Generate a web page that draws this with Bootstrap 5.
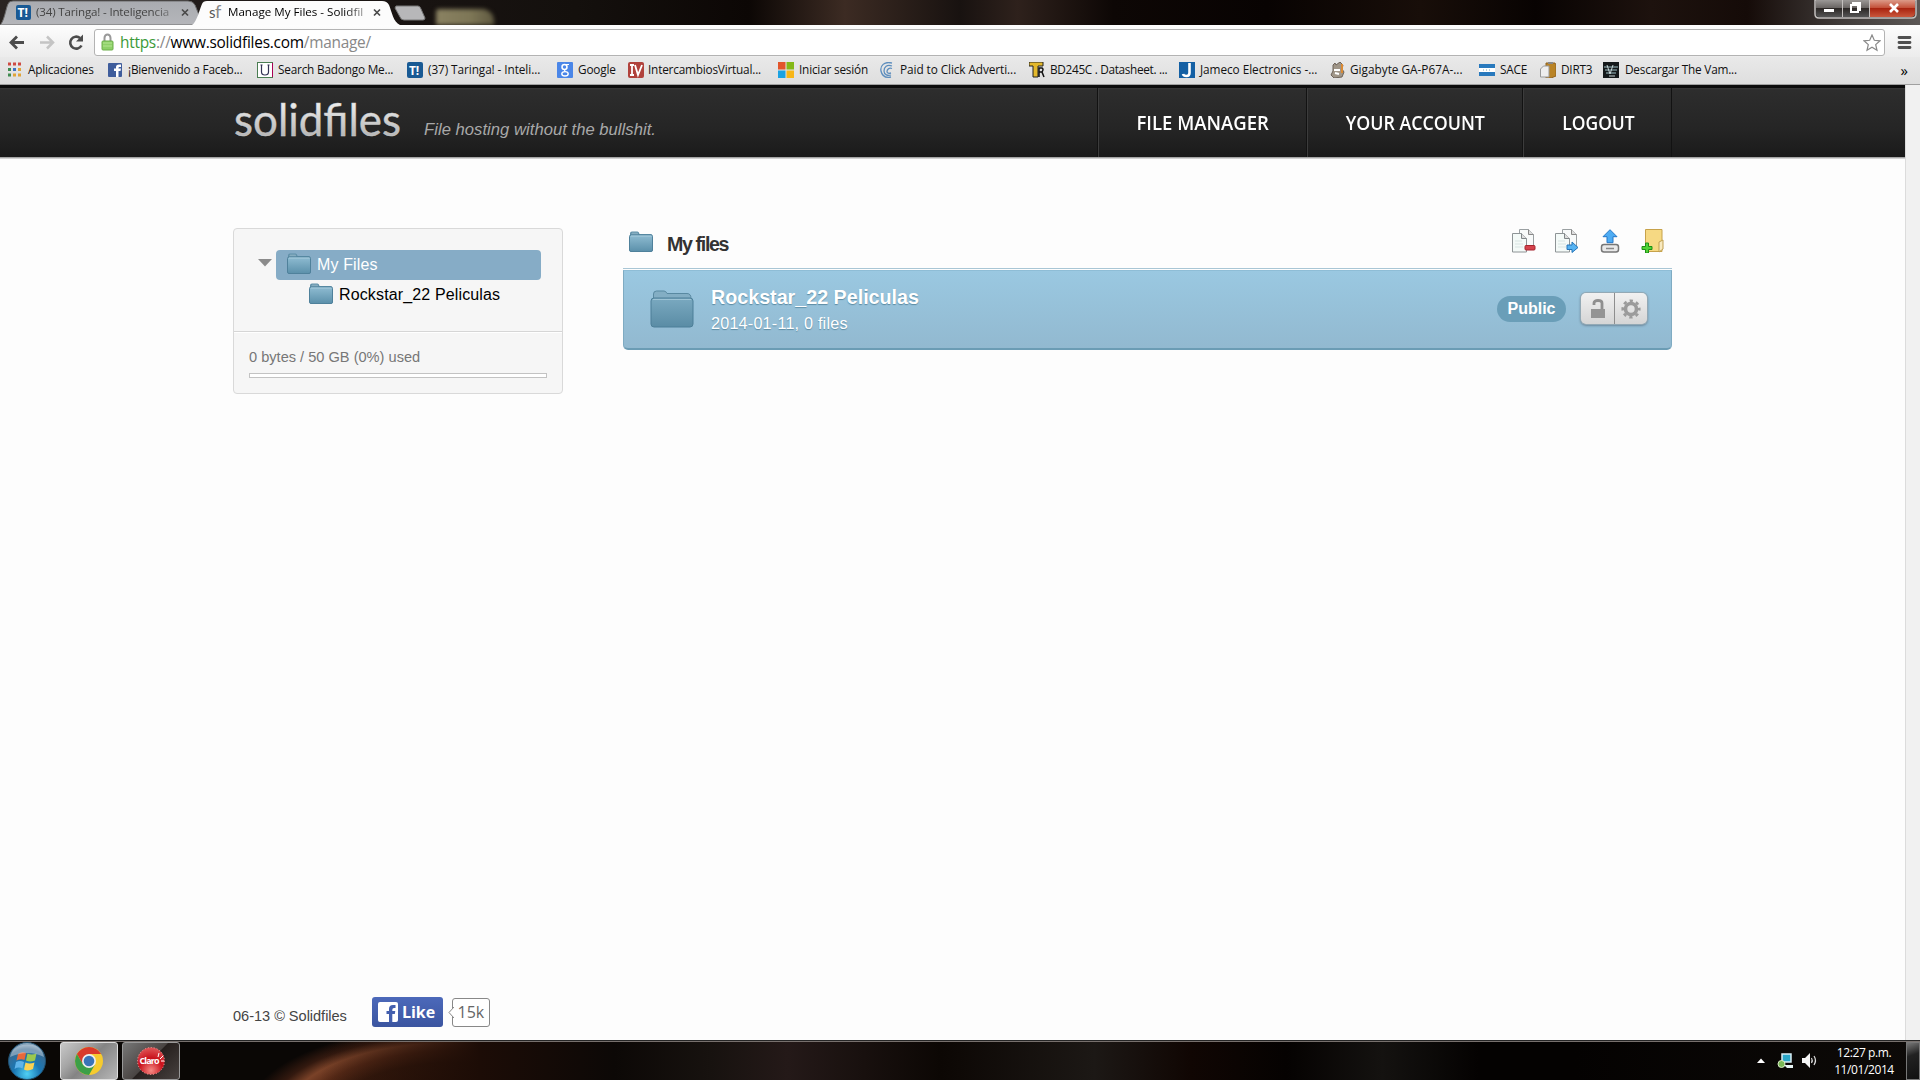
<!DOCTYPE html>
<html lang="es">
<head>
<meta charset="utf-8">
<title>Manage My Files - Solidfiles</title>
<link href="https://cdn.jsdelivr.net/npm/bootstrap@5.3.0/dist/css/bootstrap.min.css" rel="stylesheet">
<style>
body{width:1920px;height:1080px;overflow:hidden;background:#fdfdfd;font-family:"Liberation Sans",Arial,sans-serif;font-size:16px;line-height:1.2;color:#000}
svg{display:block;flex:none}
.ui{font-family:"Open Sans","Noto Sans",sans-serif;font-size:12px;white-space:nowrap}
.strip{height:25px;background:linear-gradient(90deg,#2a2422 0,#181311 22%,#14100d 30%,#0c0705 39%,#3c2b23 44%,#181210 50%,#2e211c 53%,#0d0705 58%,#080302 66%,#180e09 74%,#080302 80%,#1d120e 86%,#150b08 91%,#403b39 96%,#5c5856 100%)}
.glow{left:436px;top:9px;width:58px;height:16px;background:linear-gradient(90deg,#8a8262,#7d7656 60%,#5f5940);border-radius:3px 12px 0 0;filter:blur(2px)}
.tabtxt{font-size:11.6px;letter-spacing:-.18px;line-height:24px;height:24px}
.fade-r{-webkit-mask-image:linear-gradient(90deg,#000 82%,rgba(0,0,0,.25))}
.tab-one{width:196px;padding:0 0 0 15px}
.tab-two{width:204px;padding:0 0 0 12px}
.tabs-bg{left:0;top:0}
.toolbar{height:32px;background:linear-gradient(#fdfdfd,#ececec);padding:4px 7px 0 8px}
.omni{height:27px;border:1px solid #b3b3b3;border-radius:3px;background:#fff;width:1791px;padding:0 3px 0 6px}
.url{font-size:15.4px;letter-spacing:-.24px;line-height:24px;padding-left:5px}
.marks{height:28px;background:linear-gradient(#e9e9e9,#dedede);border-bottom:1px solid #a0a0a0;padding:0 0 2px 8px}
.bm{gap:5px;letter-spacing:-.2px;font-size:11.8px;color:#111}
.view{height:955px}
.page-col{width:1905px}
.scroller{width:15px;background:#f1f1f1;border-left:1px solid #dcdcdc}
.topbar{height:72px;border-top:3px solid #0c0c0c;background:linear-gradient(#3a3a3a 0,#2d2d2d 2px,#252525 60%,#1a1a1a 100%)}
.topshade{height:2px;background:linear-gradient(#8e8e8e,#e9e9e9)}
.wrap{width:1439px;margin-left:233px}
.slogan{font-size:16.6px;letter-spacing:.04px;color:#a9a9a9;font-style:italic;padding:32px 0 0 21px}
.navi{border-left:1px solid #121212;box-shadow:inset 1px 0 #3c3c3c;color:#fff;height:69px;font:600 19.5px "Open Sans",sans-serif}
.navi span{display:inline-block;white-space:nowrap;margin:0 -32px 0 -30px}
.side{width:330px;height:166px;border:1px solid #d9d9d9;border-radius:4px;background:#f6f6f6}
.tree{height:103px;padding:21px 21px 0 24px;border-bottom:1px solid #d6d6d6;letter-spacing:.14px}
.tree .fold{margin-top:-3px}
.sel{width:265px;height:30px;background:#86acc6;border-radius:4px;color:#fff;padding-left:11px;gap:6px}
.kid{height:30px;padding-left:51px;gap:6px}
.quota{border-top:1px solid #fff;padding:15px 15px 0;font-size:14.6px;line-height:18px;color:#777}
.meter{height:5px;border:1px solid #c3c3c3;background:#fff;margin-top:7px}
.files{width:1049px;margin-left:60px}
.head-row{height:41px;border-bottom:1px solid #a9c6d5;padding:0 7px 0 6px}
.ttl{font-size:19.6px;font-weight:700;letter-spacing:-1.35px;color:#333;padding:5px 0 0 14px}
.item-row{height:80px;margin-top:1px;background:linear-gradient(#9ac8e1,#92b9d0);border:1px solid #7fabc2;border-top-color:#8ebdd6;border-bottom:2px solid #6b9cb4;border-radius:0 0 5px 5px;padding:0 24px 2px 26px;color:#fff;text-shadow:0 1px 1px #5c8ba3}
.pub{width:69px;height:26px;border-radius:13px;background:#6a9eb8;font-weight:700;line-height:26px;text-align:center;text-shadow:none}
.duo{width:66px;height:31px;border-radius:5px;background:linear-gradient(#f1f1f1,#d5d5d5);box-shadow:0 0 0 1px #93a9b5,0 1px 3px #456}
.duo>div+div{border-left:1px solid #8e8e8e}
.foot{font-size:14.6px;color:#444;height:30px}
.like{width:71px;height:30px;border-radius:3px;background:linear-gradient(#4c69ba,#3b55a0);color:#fff;font:700 16px "Open Sans",sans-serif;gap:4px;padding-left:6px;margin-left:25px}
.cnt{width:38px;height:29px;border:1px solid #888;border-radius:3px;font:16px "Open Sans",sans-serif;color:#666;margin-left:9px;background:#fff}
.taskbar{height:40px;border-top:1px solid #262626;box-shadow:inset 0 1px #77706d;background:linear-gradient(90deg,transparent 320px,#1c0c06 480px,#0c0806 32%,#17120f 37%,#241918 41%,#0c0704 49%,#1c1815 57%,#100603 62%,#050201 67%,#141210 72%,#040201 77%,#040201 82%,#0d0a08 100%),radial-gradient(ellipse 200px 84px at 455px 72px,#2b1208 0,#381a0d 60%,#582a17 74%,#7a4228 84%,#33190f 93%,transparent 104%),#0a0705}
.tbtn{width:58px;height:38px;border:1px solid #999;border-radius:3px;background:linear-gradient(135deg,#777 0,#4a4543 48%,#26201e 50%,#47413f 100%)}
.tbtn.on{background:linear-gradient(135deg,#c8c8c8 0,#a6a6a6 30%,#848484 50%,#b7b7b7 100%);border-color:#ddd}
.clock{width:70px;font-size:12px;line-height:17px;letter-spacing:-.4px;color:#fff}
.desk{width:14px;height:38px;border:1px solid #777;background:linear-gradient(160deg,#777,#222 35%,#111)}
</style>
<script src="https://cdn.jsdelivr.net/npm/bootstrap@5.3.0/dist/js/bootstrap.bundle.min.js"></script>
</head>
<body>
<svg width="0" height="0" class="position-absolute"><defs>
<linearGradient id="fg" x2="0" y2="1"><stop stop-color="#8fbcd2"/><stop offset="1" stop-color="#5b90aa"/></linearGradient>
<linearGradient id="bg" x2="0" y2="1"><stop stop-color="#7aa9c0"/><stop offset="1" stop-color="#5a8ca5"/></linearGradient>
<linearGradient id="lg" x2="0" y2="1"><stop stop-color="#fff"/><stop offset="1" stop-color="#a8a8a8"/></linearGradient>
<linearGradient id="btn" x2="0" y2="1"><stop stop-color="#9b9896"/><stop offset=".45" stop-color="#6a6664"/><stop offset=".5" stop-color="#2c2826"/><stop offset="1" stop-color="#555"/></linearGradient>
<linearGradient id="red" x2="0" y2="1"><stop stop-color="#dc9a88"/><stop offset=".45" stop-color="#c4513a"/><stop offset=".5" stop-color="#a92410"/><stop offset="1" stop-color="#c9573c"/></linearGradient>
<radialGradient id="orb" cx=".5" cy=".85" r=".9"><stop stop-color="#4fd0f5"/><stop offset=".4" stop-color="#1a77b4"/><stop offset=".75" stop-color="#3a6a91"/><stop offset="1" stop-color="#b4c8d6"/></radialGradient>
<radialGradient id="cl" cx=".5" cy=".85" r=".9"><stop stop-color="#f58b84"/><stop offset=".5" stop-color="#c9101b"/><stop offset="1" stop-color="#e26060"/></radialGradient>
<symbol id="folder" viewBox="0 0 24 21"><path d="M1 19V2.500Q1 .5 3 .5h5.500q1.500 0 2 2.500h11q2 0 2 2v14.500q0 1-1 1H2q-1 0-1-1z" fill="#5f8fa8"/><path d="M3 1.500h5.500l1 2H2z" fill="#86adc0"/><rect x=".5" y="4" width="23" height="16.500" rx="1.500" fill="url(#fg)" stroke="#4f819b"/><path d="M2 5h20.500" stroke="#a7cbdc"/></symbol>
<symbol id="doc" viewBox="0 0 24 24"><path d="M7.500.5h9l5 5v14h-14z" fill="#f8fafa" stroke="#9aa0a2"/><path d="M16.500.5v5h5" fill="#ddd" stroke="#888"/><path d="M.5 4.500h9l5 5v13.500H.500z" fill="#f4faf8" stroke="#8e9496"/><path d="M9.500 4.500v5h5" fill="#ddd" stroke="#808688"/><path d="M3 12h7M3 15h8M3 18h8" stroke="#d7e4e2"/></symbol>
</defs></svg>

<div class="d-flex flex-column">
<!-- Window title strip -->
<div class="strip d-flex position-relative ui overflow-hidden">
  <div class="glow position-absolute"></div>
  <svg class="position-absolute tabs-bg" width="440" height="25"><defs><linearGradient id="t1" x2="0" y2="1"><stop stop-color="#a9abb0"/><stop offset="1" stop-color="#b5b6ba"/></linearGradient></defs>
    <path d="M0 25C4 22 6 8 8 4Q9 1 13 1H188Q193 1 195 5L203 25z" fill="url(#t1)" stroke="#6a6a6a"/>
    <path d="M192 25C197 22 200 8 202 4Q203 1 207 1H382Q387 1 389 5C392 12 393 22 400 25z" fill="#fcfcfc"/>
    <path d="M396 6H418Q420 6 421 9L425 18Q425 20 423 20H404Q401 20 400 17L395 8z" fill="#b7b7b9" stroke="#777"/></svg>
  <div class="tab-one d-flex position-relative gap-1">
    <svg width="17" height="21" viewBox="0 0 17 21"><rect x="1" y="5" width="15" height="15" rx="2" fill="#195a94"/><text x="2.500" y="17" font-size="12" font-weight="700" fill="#fff" font-family="Open Sans">T!</text></svg>
    <div class="tabtxt fade-r" style="width:141px;color:#444">(34) Taringa! - Inteligencia</div>
    <svg width="9" height="24" viewBox="0 0 9 24"><path d="M1 9.500l6 6m0-6l-6 6" stroke="#4a4a4a" stroke-width="1.700"/></svg>
  </div>
  <div class="tab-two d-flex position-relative">
    <svg width="20" height="23"><text x="1" y="18" font-size="15" fill="#555" font-family="Lato">s</text><text x="7" y="18" font-size="18" fill="#888" font-family="Lato">f</text></svg>
    <div class="tabtxt fade-r" style="width:141px;letter-spacing:0">Manage My Files - Solidfil</div>
    <svg class="ms-1" width="9" height="24" viewBox="0 0 9 24"><path d="M1 9.500l6 6m0-6l-6 6" stroke="#4a4a4a" stroke-width="1.700"/></svg>
  </div>
  <svg class="ms-auto" style="margin-right:2px" width="104" height="20" viewBox="0 0 104 20"><path d="M1 0V14Q1 18 5 18H98Q102 18 102 14V0z" fill="#333" stroke="#c4c0be" stroke-width="1.500"/><path d="M2 0H28V17H6Q2 17 2 13z" fill="url(#btn)"/><path d="M29 0H55V17H29z" fill="url(#btn)"/><path d="M56 0H101V13Q101 17 97 17H56z" fill="url(#red)"/><path d="M28.500 0V17M55.500 0V17" stroke="#c4c0be"/><path d="M10 10.500h10" stroke="#fff" stroke-width="3"/><path d="M37 5h7v7h-7zM39 5V3h7v7h-2" fill="none" stroke="#fff" stroke-width="2"/><path d="M76 4l8 8m0-8l-8 8" stroke="#fff" stroke-width="2.600"/></svg>
</div>
<!-- Address bar -->
<div class="toolbar d-flex ui">
  <svg width="86" height="27" viewBox="0 0 86 27"><path d="M16 13.500H4M9 7.500l-6 6 6 6" fill="none" stroke="#4c4c4c" stroke-width="2.800"/><path d="M32 13.500H44M39 7.500l6 6-6 6" fill="none" stroke="#c4c4c4" stroke-width="2.500"/><path d="M73.500 16.500A6 6 0 1 1 72 9" fill="none" stroke="#4c4c4c" stroke-width="2.600"/><path d="M75 5.500v7h-7z" fill="#4c4c4c"/></svg>
  <div class="omni d-flex align-items-center">
    <svg width="14" height="19" viewBox="0 0 14 19"><path d="M3.500 9V5a3 3.500 0 0 1 6 0V9" fill="none" stroke="#999" stroke-width="2"/><rect x="1" y="8" width="11" height="9" rx="1" fill="#8ed168" stroke="#6cae4a"/><path d="M2 10h9M2 13h9" stroke="#b5e593"/></svg>
    <div class="url"><span style="color:#3b9a38">https</span><span style="color:#888">://</span>www.solidfiles.com<span style="color:#888">/manage/</span></div>
    <svg class="ms-auto" width="18" height="18" viewBox="0 0 18 18"><path d="M9 1l2.300 5.300 5.700.5-4.300 3.800 1.300 5.700L9 13.300 4 16.300l1.300-5.700L1 6.800l5.700-.5z" fill="#fff" stroke="#888" stroke-width="1.200"/></svg>
  </div>
  <svg class="ms-auto" width="16" height="27" viewBox="0 0 16 27"><path d="M2 8.500h11M2 13.500h11M2 18.500h11" stroke="#505050" stroke-width="2.800" stroke-linecap="round"/></svg>
</div>
<!-- Bookmarks -->
<div class="marks d-flex align-items-center ui position-relative">
  <div class="bm d-flex align-items-center" style="width:100px;gap:4px"><svg width="16" height="16" viewBox="0 0 16 16"><path d="M0 2h3M5 2h3M10 2h3" stroke="#cf4a42" stroke-width="3"/><path d="M0 7.500h3" stroke="#3f8b4f" stroke-width="3"/><path d="M5 7.500h3" stroke="#3f72c4" stroke-width="3"/><path d="M10 7.500h3" stroke="#e0a438" stroke-width="3"/><path d="M0 13h3" stroke="#3f8b4f" stroke-width="3"/><path d="M5 13h3M10 13h3" stroke="#e0a438" stroke-width="3"/></svg>Aplicaciones</div>
  <div class="bm d-flex align-items-center" style="width:149px;gap:4px"><svg width="16" height="16" viewBox="0 0 16 16"><rect y="1" width="14" height="14" rx="1" fill="#3f5d9c"/><path d="M8 15V9H6V6.500h2V5q0-2.500 3-2.500h2V5h-1.500Q10.500 5 10.500 6v.5H13L12.500 9h-2v6z" fill="#fff"/></svg>¡Bienvenido a Faceb...</div>
  <div class="bm d-flex align-items-center" style="width:150px"><svg width="16" height="16" viewBox="0 0 16 16"><rect x=".5" y=".5" width="15" height="15" fill="#fff" stroke="#4a7d52"/><path d="M15.500 1v14" stroke="#a05"/><path d="M3.500 3h2M10.500 3h2M4.500 3v7q0 3 3.500 3t3.500-3V3" fill="none" stroke="#335" stroke-width="1.200"/></svg>Search Badongo Me...</div>
  <div class="bm d-flex align-items-center" style="width:150px"><svg width="16" height="16" viewBox="0 0 16 16"><rect width="16" height="16" rx="2" fill="#195a94"/><text x="2" y="12.500" font-size="12" font-weight="700" fill="#fff" font-family="Open Sans">T!</text></svg><span style="letter-spacing:-.08px">(37) Taringa! - Inteli...</span></div>
  <div class="bm d-flex align-items-center" style="width:71px"><svg width="16" height="16" viewBox="0 0 16 16"><rect width="16" height="16" rx="1" fill="#4a86e8"/><g fill="none" stroke="#fff"><circle cx="7.500" cy="5" r="2.500" stroke-width="1.500"/><path d="M9 2.500h3M8.500 7.500q-2 1 0 2" stroke-width="1.200"/><ellipse cx="8" cy="11.800" rx="3.200" ry="2.200" stroke-width="1.400"/></g></svg>Google</div>
  <div class="bm d-flex align-items-center" style="width:150px;gap:4px"><svg width="16" height="16" viewBox="0 0 16 16"><rect width="16" height="16" rx="2" fill="#b1423c"/><path d="M2 3h4M4 3v10M2 13h4M7 3l3 10 4-10" fill="none" stroke="#fff" stroke-width="1.800"/></svg>IntercambiosVirtual...</div>
  <div class="bm d-flex align-items-center" style="width:102px"><svg width="16" height="16" viewBox="0 0 16 16"><path fill="#e2552b" d="M0 0h7.500v7.500H0z"/><path fill="#84b817" d="M8.500 0H16v7.500H8.500z"/><path fill="#1ba2e2" d="M0 8.500h7.500V16H0z"/><path fill="#f8b617" d="M8.500 8.500H16V16H8.500z"/></svg>Iniciar sesión</div>
  <div class="bm d-flex align-items-center" style="width:149px;gap:4px"><svg width="16" height="16" viewBox="0 0 16 16"><path d="M12 1C4-1 0 4 1 9s5 7 10 6M12 4C7 2 4 5 4 9s4 5 7 4M12 6.500c-3-1-5 1-5 3s2 2 4 1.500" fill="none" stroke="#5c8dbd" stroke-width="1.300"/></svg><span style="letter-spacing:-.08px">Paid to Click Adverti...</span></div>
  <div class="bm d-flex align-items-center" style="width:150px"><svg width="16" height="16" viewBox="0 0 16 16"><path d="M0 0h14v4H9v11H4V4H0z" fill="#e4b92c" stroke="#222"/><path d="M10 15V6h3q2 1 0 4l2 5M10 10h3" fill="none" stroke="#111" stroke-width="1.500"/></svg><span style="letter-spacing:-.32px">BD245C . Datasheet. ...</span></div>
  <div class="bm d-flex align-items-center" style="width:151px"><svg width="16" height="16" viewBox="0 0 16 16"><rect width="16" height="16" fill="#1460a4"/><path d="M10.500 1v10q0 3-3 3T4 12" fill="none" stroke="#fff" stroke-width="2.600"/></svg><span style="letter-spacing:-.06px">Jameco Electronics -...</span></div>
  <div class="bm d-flex align-items-center" style="width:149px;gap:4px"><svg width="16" height="16" viewBox="0 0 16 16"><path d="M3 3l2-2 1 2 4-3 3 3-1 4 2 3-2 5-8 1-3-3 2-4z" fill="#a09688" stroke="#6d6258"/><path d="M4 8h6M5 11l4 1" stroke="#fff" stroke-width="2"/><path d="M12 2v9" stroke="#d98a35" stroke-width="2"/></svg><span style="letter-spacing:0">Gigabyte GA-P67A-...</span></div>
  <div class="bm d-flex align-items-center" style="width:61px"><svg width="16" height="16" viewBox="0 0 16 16"><path fill="#2879bd" d="M0 2h16v4H0zM0 10h16v4H0z"/><path fill="#fff" d="M0 6h16v4H0z"/><path d="M4 8h8" stroke="#7ab" stroke-dasharray="1 2"/></svg>SACE</div>
  <div class="bm d-flex align-items-center" style="width:63px"><svg width="16" height="16" viewBox="0 0 16 16"><path d="M6 1h9l1 2v11l-5 2H6z" fill="#b98325" stroke="#8f6220"/><path d="M8 0h5v2H8z" fill="#888"/><path d="M.5 7l3-3H9v11H.500z" fill="#eee" stroke="#999"/></svg>DIRT3</div>
  <div class="bm d-flex align-items-center" style="gap:6px"><svg width="16" height="16" viewBox="0 0 16 16"><rect width="16" height="16" fill="#15191b"/><path d="M1 5h14M2 8h12M3 11h10" stroke="#71898f" stroke-width="1.600"/><path d="M4 3l3 9 3-9M6 14h6" stroke="#c5d2d4" fill="none"/></svg>Descargar The Vam...</div>
  <div class="ms-auto pe-2 me-1" style="font-size:15px">»</div>
</div>
<!-- Page -->
<div class="view d-flex">
  <div class="page-col d-flex flex-column">
    <div class="topbar">
      <div class="wrap d-flex">
        <svg width="170" height="66"><text x="1" y="47.500" font-family="Lato" font-size="44" fill="url(#lg)" stroke="#cfcfcf" stroke-width=".4" textLength="167" lengthAdjust="spacingAndGlyphs">solidfiles</text></svg>
        <div class="slogan">File hosting without the bullshit.</div>
        <nav class="d-flex ms-auto">
          <div class="navi d-flex align-items-center justify-content-center" style="width:209px"><span style="transform:scaleX(.95)">FILE MANAGER</span></div>
          <div class="navi d-flex align-items-center justify-content-center" style="width:216px"><span style="transform:scaleX(.912)">YOUR ACCOUNT</span></div>
          <div class="navi d-flex align-items-center justify-content-center" style="width:149px"><span style="transform:scaleX(.895)">LOGOUT</span></div>
          <div class="navi"></div>
        </nav>
      </div>
    </div>
    <div class="topshade"></div>
    <div class="wrap d-flex align-items-start" style="padding-top:69px">
      <aside class="side">
        <div class="tree">
          <div class="d-flex"><svg width="18" height="30"><path d="M0 9h14l-7 7.500z" fill="#8b8b8b"/></svg>
            <div class="sel d-flex align-items-center"><svg class="fold" width="24" height="21"><use href="#folder"/></svg>My Files</div></div>
          <div class="kid d-flex align-items-center"><svg class="fold" width="24" height="21"><use href="#folder"/></svg>Rockstar_22 Peliculas</div>
        </div>
        <div class="quota">0 bytes / 50 GB (0%) used<div class="meter"></div></div>
      </aside>
      <main class="files">
        <div class="head-row d-flex">
          <svg width="24" height="21" style="margin-top:3px"><use href="#folder"/></svg>
          <div class="ttl">My files</div>
          <div class="ms-auto d-flex" style="gap:19px;padding-top:1px">
            <svg width="24" height="24"><use href="#doc"/><rect x="13" y="16.500" width="10" height="4.500" rx="1" fill="#d5424c" stroke="#a5242e"/></svg>
            <svg width="24" height="24"><use href="#doc"/><path d="M12 16h5v-3l6 5.500-6 5v-3h-5z" fill="#56b3f2" stroke="#2574b8"/></svg>
            <svg width="24" height="24"><path d="M12 .7l7 7h-4v6H9v-6H5z" fill="#4eacf3" stroke="#2377c8"/><rect x="3.500" y="15.500" width="17" height="7.500" rx="2.500" fill="#e9e9e9" stroke="#777" stroke-width="1.500"/><path d="M8 19.500h8" stroke="#888" stroke-width="1.500"/></svg>
            <svg width="24" height="24"><path d="M4.500.5h16.500V22.500H4.500z" fill="#f6d983" stroke="#c7a24a"/><path d="M18 13l4-2v9l-4 3z" fill="#f9eac0" stroke="#c0a050"/><path d="M4.500 14h3v3.500H11v3H7.500V24h-3v-3.500H1v-3h3.500z" fill="#4fd436" stroke="#1f8f17"/></svg>
          </div>
        </div>
        <div class="item-row d-flex align-items-center">
          <svg width="44" height="40" viewBox="0 0 44 40"><path d="M3.500 9V5q0-3 3-3H14q2 0 3 2.500h20q4 0 4 5" fill="#83aec4" stroke="#5989a1"/><rect x="1" y="9" width="42" height="29" rx="3" fill="url(#bg)" stroke="#4d7f98"/><path d="M3 10.500h38" stroke="#9dc3d5"/></svg>
          <div style="padding:2px 0 0 17px"><div class="fw-bold" style="font-size:19.7px;line-height:26px">Rockstar_22 Peliculas</div><div style="font-size:16.200px;line-height:26px;letter-spacing:.2px">2014-01-11, 0 files</div></div>
          <div class="pub ms-auto">Public</div>
          <div class="duo d-flex" style="margin-left:15px">
            <div class="w-50 d-flex align-items-center justify-content-center"><svg width="16" height="20"><path d="M4 6V4q0-2.500 4-2.500t4 2.500v6" fill="none" stroke="#8f8f8f" stroke-width="2.800"/><rect x="1" y="10" width="14" height="9" fill="#949494"/></svg></div>
            <div class="w-50 d-flex align-items-center justify-content-center"><svg width="20" height="20" viewBox="-10 -10 20 20"><circle r="5.500" fill="none" stroke="#9b9b9b" stroke-width="3.600"/><circle r="8.300" fill="none" stroke="#9b9b9b" stroke-width="2.600" stroke-dasharray="3.260 3.260" stroke-dashoffset="1.630"/></svg></div>
          </div>
        </div>
      </main>
    </div>
    <footer class="wrap foot d-flex align-items-center mt-auto" style="margin-bottom:13px">
      <span style="padding-top:9px;letter-spacing:-.04px">06-13 © Solidfiles</span>
      <div class="like d-flex align-items-center"><svg width="20" height="20" viewBox="0 0 20 20"><rect width="20" height="20" rx="2" fill="#fff"/><path d="M11 20v-8H8.500V9H11V7q0-4 4-4h2.500v3H16q-1.700 0-1.700 1.700V9h3l-.5 3h-2.500v8z" fill="#435fae"/></svg>Like</div>
      <div class="cnt position-relative d-flex align-items-center justify-content-center"><svg class="position-absolute" style="left:-5px;top:8px" width="6" height="12"><path d="M6 0L1 5.500 6 11" fill="#fff" stroke="#888"/></svg>15k</div>
    </footer>
  </div>
  <div class="scroller"></div>
</div>
<!-- Taskbar -->
<div class="taskbar d-flex ui align-items-center">
  <svg width="60" height="38" viewBox="0 0 60 38"><circle cx="27" cy="19" r="18.500" fill="url(#orb)" stroke="#20506f"/><path d="M18 12q4-3 8-1l-1.500 7q-4-1.500-8 .5z" fill="#e8693a"/><path d="M27.500 11.500q4 2 9 0L35 18.500q-5 2-9 0z" fill="#9cc94e"/><path d="M16 20q4-2 8 0l-1.500 6.500q-4-2-8 .5z" fill="#5fb4ea"/><path d="M25.500 20.500q4 2 9 0L33 27q-5 2.500-9 .5z" fill="#fbd252"/><path d="M10 15Q13 3 27 2.500T44 15Q28 7 10 15z" fill="#fff" opacity=".35"/></svg>
  <div class="tbtn on d-flex align-items-center justify-content-center"><svg width="30" height="30" viewBox="-15 -15 30 30"><circle r="14" fill="#f6cb2e"/><path d="M0-7H12.100A14 14 0 0 0-12.100-7L-6 3.500z" fill="#d93a2c"/><path d="M-12.100-7A14 14 0 0 0 0 14L6 3.500-6 3.500z" fill="#3c9f48"/><circle r="7" fill="#eee"/><circle r="5.300" fill="#3a74b8"/></svg></div>
  <div class="tbtn d-flex align-items-center justify-content-center" style="margin-left:4px"><svg width="32" height="32" viewBox="0 0 32 32"><circle cx="16" cy="16" r="13.500" fill="url(#cl)" stroke="#f3a09c" stroke-dasharray="1 2"/><text x="4.500" y="19" font-size="9" font-weight="700" fill="#fff" font-family="Open Sans" textLength="20">Claro</text><path d="M23 12l1-4M25 14l3-3M26 16h3" stroke="#fff"/></svg></div>
  <svg class="ms-auto" width="70" height="20" viewBox="0 0 70 20"><path d="M6 12l4-4.500 4 4.500z" fill="#fff"/><rect x="31" y="3" width="9" height="8" fill="#2aa6c8" stroke="#d8eef5" stroke-width="1.500"/><path d="M33 14h9v3h-6" fill="#e8f4f4"/><circle cx="30.500" cy="13" r="3.500" fill="#7ab857" stroke="#d8ecc5"/><path d="M51 7h3l5-5v15l-5-5h-3z" fill="#f5f5f5"/><path d="M60.500 7q1.500 2.500 0 5M63 5q3 4.500 0 9" fill="none" stroke="#ddd" stroke-width="1.200"/></svg>
  <div class="clock text-center" style="margin-left:8px;margin-right:7px">12:27 p.m.<br>11/01/2014</div>
  <div class="desk"></div>
</div>
</div>
</body>
</html>
